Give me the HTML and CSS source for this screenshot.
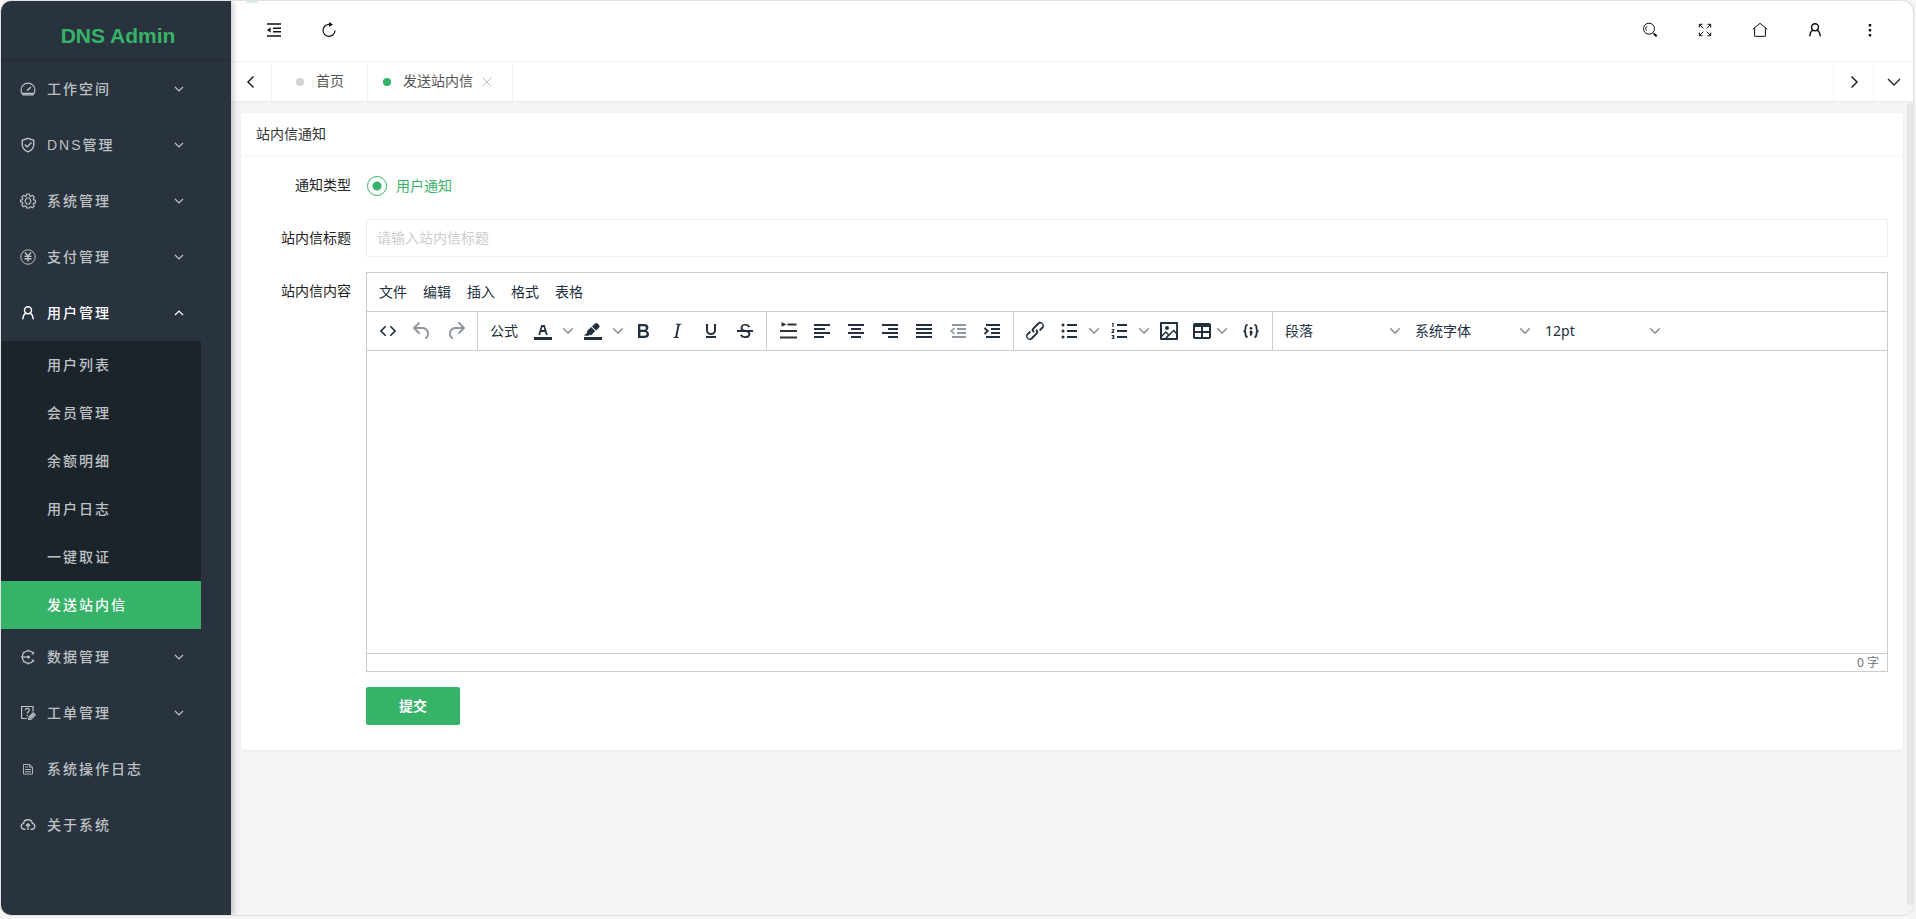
FILE: index.html
```html
<!DOCTYPE html>
<html lang="zh-CN">
<head>
<meta charset="utf-8">
<title>DNS Admin</title>
<link rel="stylesheet" href="styles.css">
</head>
<body>
<svg class="sprite" aria-hidden="true">
  <symbol id="chev" viewBox="0 0 10 10"><path d="M8.7 2.2c.3-.3.8-.3 1 0 .4.4.4.9 0 1.2L5.7 7.8c-.3.3-.9.3-1.2 0L.2 3.4a.8.8 0 0 1 0-1.2c.3-.3.8-.3 1.1 0L5 6l3.7-3.8z"/></symbol>
  <symbol id="down" viewBox="0 0 16 16"><path d="M4 6l4 4 4-4" fill="none" stroke="currentColor" stroke-width="1.2"/></symbol>
  <symbol id="user" viewBox="0 0 16 16"><g fill="none" stroke="currentColor" stroke-width="1.5" stroke-linecap="round"><circle cx="8" cy="5.2" r="3.5"/><path d="M5.6 8.2C3.9 9.4 3 11 2.8 13.8M10.4 8.2c1.7 1.2 2.6 2.8 2.8 5.6"/></g></symbol>
</svg>
<div class="window">
  <aside class="side">
    <div class="logo">DNS Admin</div>
    <nav class="menu">
      <a class="item" href="#"><svg class="mi" viewBox="0 0 16 16"><g fill="none" stroke="currentColor" stroke-width="1.2"><path d="M3 13.8h10a6.9 6.9 0 1 0-10 0z"/><path d="M3 12.600h10M7.200 9.600L10.800 6" stroke-width="1.500"/></g></svg><span>工作空间</span><svg class="arrow"><use href="#down"/></svg></a>
      <a class="item" href="#"><svg class="mi" viewBox="0 0 16 16"><g fill="none" stroke="currentColor" stroke-width="1.4"><path d="M8 1.3l5.7 2v5c0 3.2-2.5 5.2-5.7 6.600-3.200-1.400-5.700-3.400-5.700-6.600v-5z"/><path d="M4.800 7.600l2.400 2.400 4.200-4.400"/></g></svg><span>DNS管理</span><svg class="arrow"><use href="#down"/></svg></a>
      <a class="item" href="#"><svg class="mi" viewBox="0 0 16 16"><g fill="none" stroke="currentColor" stroke-width="1.2" stroke-linejoin="round"><path d="M6.600 1h2.800l.4 1.900 1.100.5 1.700-1.100 1.700 1.900-1 1.600.5 1.100 1.700.3v2.600l-1.800.4-.5 1.100 1 1.700-1.800 1.800-1.600-1-1.100.4L9.300 15H6.700l-.4-1.800-1.100-.4-1.600 1-1.900-1.800 1.100-1.700-.5-1.100L.5 8.800V7.200l1.800-.4.500-1.100-1-1.600 1.700-1.800 1.700 1 1.100-.4z"/><path d="M6.600 5h2.800l1.600 3-1.600 3H6.600L5 8z"/></g></svg><span>系统管理</span><svg class="arrow"><use href="#down"/></svg></a>
      <a class="item" href="#"><svg class="mi" viewBox="0 0 16 16"><g fill="none" stroke="currentColor"><circle cx="8" cy="8" r="7.2"/><path d="M5 3.500l3 3.800 3-3.800M4.500 7.400h7M4.500 9.700h7M8 7v5.500" stroke-width="1.4"/></g></svg><span>支付管理</span><svg class="arrow"><use href="#down"/></svg></a>
      <a class="item open" href="#"><svg class="mi"><use href="#user"/></svg><span>用户管理</span><svg class="arrow"><use href="#down"/></svg></a>
      <div class="sub">
        <a href="#">用户列表</a><a href="#">会员管理</a><a href="#">余额明细</a><a href="#">用户日志</a><a href="#">一键取证</a><a class="on" href="#">发送站内信</a>
      </div>
      <a class="item" href="#"><svg class="mi" viewBox="0 0 16 16"><g fill="none" stroke="currentColor"><path d="M13.600 4.600A6.200 6.200 0 1 0 13.600 11.400" stroke-width="1.2"/><path d="M1 8h7" stroke-width="1.2"/><path d="M13.600 2.800v2.200h-2M13.600 13v-2h-2M8 .6v1.600M8 14v1.600M3.200 2.600l1 1.200M3.200 13.400l1-1.200" stroke-width="1"/></g><circle cx="8.500" cy="8" r="1.500" fill="currentColor"/></svg><span>数据管理</span><svg class="arrow"><use href="#down"/></svg></a>
      <a class="item" href="#"><svg class="mi" viewBox="0 0 16 16"><g fill="none" stroke="currentColor" stroke-width="1.2"><path d="M13 6.500V1.500H1.600v12H7"/><path d="M5.300 5.200c0-2.600 4-2.400 4 0 0 1.500-2 1.600-2 3.200M7.300 9.800v1.400"/><path d="M8.600 14.600l.4-2.500 4.200-4.200 2 2L11 14.200zM10 13l3.500-3.500"/></g></svg><span>工单管理</span><svg class="arrow"><use href="#down"/></svg></a>
      <a class="item" href="#"><svg class="mi" viewBox="0 0 16 16"><path d="M3.500 3.500h6l3 2.600v7h-9zM9.500 3.500v2.700h3M5 6h3M5 8.500h6M5 10.800h6" fill="none" stroke="currentColor" stroke-width=".9"/></svg><span>系统操作日志</span></a>
      <a class="item" href="#"><svg class="mi" viewBox="0 0 16 16"><path d="M5.500 12.300H4A3 3 0 0 1 3.600 6.400C4 1.600 11.600 1.400 12.400 6.400c3.300.5 3 5.600-.4 5.900h-1.500M8 13V7M5.800 9L8 6.800 10.200 9" fill="none" stroke="currentColor" stroke-width="1.4"/></svg><span>关于系统</span></a>
    </nav>
  </aside>
  <main class="main">
    <header class="bar">
      <button class="hb" aria-label="收起菜单"><svg viewBox="0 0 16 16"><path d="M1 2h14M7 6.300h8M7 9.700h8M1 14h14" fill="none" stroke="currentColor" stroke-width="1.6"/><path d="M1 8l3.600-2.500v5z" fill="currentColor"/></svg></button>
      <button class="hb" aria-label="刷新"><svg viewBox="0 0 16 16"><path d="M8.600 2.400A6 6 0 1 0 14 8.600" fill="none" stroke="currentColor" stroke-width="1.2"/><path d="M8 0l4 2.500L8.200 5z" fill="currentColor"/></svg></button>
      <span class="grow"></span>
      <button class="hb" aria-label="搜索"><svg viewBox="0 0 16 16"><g fill="none" stroke="currentColor"><circle cx="7" cy="6.700" r="5.500"/><path d="M4.300 8.600A3.300 3.300 0 0 1 5 4.200M11 10.500l3.700 3.700"/><path d="M12 11.700l2.600 2.600" stroke-width="2"/></g></svg></button>
      <button class="hb" aria-label="全屏"><svg viewBox="0 0 16 16"><path d="M6.300 6.300l-4-4M9.700 6.300l4-4M6.300 9.700l-4 4M9.700 9.700l4 4M2.300 5.500V2.300h3.200M10.500 2.300h3.200v3.200M13.700 10.500v3.200h-3.200M5.500 13.700H2.300v-3.200" fill="none" stroke="currentColor" stroke-width="1"/></svg></button>
      <button class="hb" aria-label="主页"><svg viewBox="0 0 16 16"><path d="M.8 7.300L8 1.300l7.200 6M2.600 6v8.300h10.800V6" fill="none" stroke="currentColor"/></svg></button>
      <button class="hb" aria-label="用户"><svg><use href="#user"/></svg></button>
      <button class="hb" aria-label="更多"><svg viewBox="0 0 16 16"><path d="M6.800 2h2.400v2.400H6.800zM6.800 7h2.400v2.400H6.800zM6.800 12h2.400v2.400H6.800z" fill="currentColor"/></svg></button>
    </header>
    <div class="tabs">
      <button class="ctl" aria-label="向左"><svg viewBox="0 0 16 16"><path d="M10.500 2.500L5 8l5.500 5.500" fill="none" stroke="currentColor" stroke-width="1.5"/></svg></button>
      <a class="tab" href="#"><i class="dot"></i><span>首页</span></a>
      <div class="tab cur"><i class="dot"></i><a href="#">发送站内信</a><button class="x" aria-label="关闭"><svg viewBox="0 0 10 10"><path d="M.5.5l9 9M9.500.5l-9 9" stroke="currentColor"/></svg></button></div>
      <span class="grow"></span>
      <button class="ctl right" aria-label="向右"><svg viewBox="0 0 16 16"><path d="M5.500 2.500L11 8l-5.500 5.500" fill="none" stroke="currentColor" stroke-width="1.5"/></svg></button>
      <button class="ctl right" aria-label="展开"><svg viewBox="0 0 16 16"><path d="M2 5l6 6 6-6" fill="none" stroke="currentColor" stroke-width="1.3"/></svg></button>
    </div>
    <div class="content">
      <section class="card">
        <h1 class="title">站内信通知</h1>
        <form class="form">
          <span class="lab" id="type">通知类型</span>
          <div class="field" role="radiogroup" aria-labelledby="type"><label class="radio"><input type="radio" name="type" checked>用户通知</label></div>
          <label class="lab" for="subject">站内信标题</label>
          <input class="text" id="subject" type="text" placeholder="请输入站内信标题">
          <label class="lab" for="body">站内信内容</label>
          <div class="editor">
            <div class="menubar"><button type="button">文件</button><button type="button">编辑</button><button type="button">插入</button><button type="button">格式</button><button type="button">表格</button></div>
            <div class="tools">
              <div class="grp">
                <button type="button" class="tb" aria-label="源代码"><svg viewBox="0 0 24 24"><path d="M9.800 15.700c.3.3.3.8 0 1-.3.4-.9.4-1.200 0l-4.400-4.100a.8.8 0 0 1 0-1.200l4.400-4.200c.3-.3.9-.3 1.200 0 .3.3.3.8 0 1.100L6 12l3.800 3.700zM14.200 15.700c-.3.3-.3.8 0 1 .4.4.9.4 1.200 0l4.400-4.100c.3-.3.3-.9 0-1.200l-4.400-4.200a.8.8 0 0 0-1.200 0c-.3.3-.3.8 0 1.100L18 12l-3.800 3.700z"/></svg></button>
                <button type="button" class="tb" disabled aria-label="撤销"><svg viewBox="0 0 24 24"><path d="M6.400 8H12c3.700 0 6.200 2 6.800 5.100.6 2.700-.4 5.600-2.300 6.800a1 1 0 0 1-1-1.800c1.100-.6 1.800-2.700 1.400-4.600-.5-2.100-2.100-3.500-4.900-3.500H6.400l3.300 3.300a1 1 0 1 1-1.400 1.400l-5-5a1 1 0 0 1 0-1.400l5-5a1 1 0 0 1 1.400 1.400L6.400 8z"/></svg></button>
                <button type="button" class="tb" disabled aria-label="重做"><svg viewBox="0 0 24 24"><path d="M17.600 10H12c-2.800 0-4.400 1.400-4.900 3.500-.4 2 .3 4 1.400 4.600a1 1 0 1 1-1 1.800c-2-1.200-2.900-4.100-2.300-6.800.6-3 3-5.100 6.800-5.100h5.600l-3.300-3.300a1 1 0 1 1 1.400-1.400l5 5a1 1 0 0 1 0 1.400l-5 5a1 1 0 0 1-1.400-1.400l3.300-3.300z"/></svg></button>
              </div>
              <div class="grp">
                <button type="button" class="tb word">公式</button>
                <button type="button" class="tb" aria-label="文字颜色"><svg viewBox="0 0 24 24"><path d="M3 18h18v3H3z"/><path d="M8.700 16h-.8a.5.500 0 0 1-.5-.6l2.700-9c.1-.3.3-.4.5-.4h2.800c.2 0 .4.100.5.400l2.700 9a.5.500 0 0 1-.5.600h-.8a.5.500 0 0 1-.4-.4l-.7-2.200c0-.3-.3-.4-.5-.4h-3.400c-.2 0-.4.100-.5.400l-.7 2.200c0 .3-.2.400-.4.400zm2.600-7.600l-.6 2a.5.500 0 0 0 .5.600h1.600a.5.500 0 0 0 .5-.6l-.6-2c0-.3-.3-.4-.5-.4h-.4c-.2 0-.4.100-.5.400z"/></svg></button><button type="button" class="cv" aria-label="选择文字颜色"><svg><use href="#chev"/></svg></button>
                <button type="button" class="tb" aria-label="背景颜色"><svg viewBox="0 0 24 24"><path d="M3 18h18v3H3z"/><path d="M7.700 16.700H3l3.300-3.300-.7-.8L10.200 8l4 4.100-4 4.200c-.2.200-.6.200-.8 0l-.6-.7-1.100 1.100zm5-7.500L11 7.400l3-2.900a2 2 0 0 1 2.600 0L18 6c.7.700.7 2 0 2.700l-2.900 2.900-1.800-1.800-.5-.6"/></svg></button><button type="button" class="cv" aria-label="选择背景颜色"><svg><use href="#chev"/></svg></button>
                <button type="button" class="tb" aria-label="粗体"><svg viewBox="0 0 24 24"><path fill-rule="evenodd" d="M7.800 19c-.3 0-.5 0-.6-.2l-.2-.5V5.700c0-.2 0-.4.2-.5l.6-.2h5c1.500 0 2.700.3 3.500 1 .7.6 1.100 1.400 1.100 2.500a3 3 0 0 1-.6 1.900c-.4.6-1 1-1.600 1.200.4.1.9.3 1.300.6s.8.7 1 1.200c.4.4.5 1 .5 1.600 0 1.300-.4 2.300-1.300 3-.8.7-2.100 1-3.800 1H7.800zm5-8.300c.6 0 1.200-.1 1.600-.5.4-.3.6-.7.6-1.300 0-1.100-.8-1.700-2.300-1.700H9.300v3.500h3.400zm.5 6c.7 0 1.300-.1 1.700-.4.4-.4.6-.9.6-1.500s-.2-1-.7-1.400c-.4-.3-1-.4-2-.4H9.400v3.800h4z"/></svg></button>
                <button type="button" class="tb" aria-label="斜体"><svg viewBox="0 0 24 24"><path d="M16.700 4.700l-.1.900h-.3c-.6 0-1 0-1.400.3-.3.3-.4.6-.5 1.100l-2.100 9.800v.6c0 .5.4.8 1.400.8h.2l-.2.800H8l.2-.8h.2c1.100 0 1.800-.5 2-1.500l2-9.800.1-.5c0-.6-.4-.8-1.400-.8h-.3l.2-.9h5.700z"/></svg></button>
                <button type="button" class="tb" aria-label="下划线"><svg viewBox="0 0 24 24"><path d="M8 5v6.500a4 3.500 0 0 0 8 0V5" fill="none" stroke="currentColor" stroke-width="2"/><path d="M7 17h10v2H7z"/></svg></button>
                <button type="button" class="tb" aria-label="删除线"><svg viewBox="0 0 24 24"><path d="M15.600 8.500c-.5-.7-1-1.100-1.300-1.300-.6-.4-1.300-.6-2-.6-2.700 0-2.800 1.700-2.800 2.100 0 1.600 1.800 2 3.200 2.300 4.400.9 4.600 2.800 4.600 3.900 0 1.400-.7 4.100-5 4.100A6.200 6.200 0 0 1 7 16.400l1.500-1.100c.4.6 1.600 2 3.700 2 1.600 0 2.500-.4 3-1.200.4-.8.3-2-.8-2.600-.7-.4-1.600-.7-2.900-1-1-.2-3.900-.8-3.900-3.600C7.600 6 10.300 5 12.400 5c2.900 0 4.200 1.600 4.700 2.400l-1.500 1.100z"/><path d="M4 11h16v2H4z"/></svg></button>
              </div>
              <div class="grp">
                <button type="button" class="tb" aria-label="行高"><svg viewBox="0 0 24 24"><path d="M11.500 5.500H20.500M4 12h17M4 18.500h17" stroke="#333" stroke-width="2"/><path d="M5.500 3l5 2.500-5 2.300z" fill="#333"/></svg></button>
                <button type="button" class="tb" aria-label="左对齐"><svg viewBox="0 0 24 24"><path d="M4 5h16v2H4zM4 9h11v2H4zM4 13h16v2H4zM4 17h10v2H4z"/></svg></button>
                <button type="button" class="tb" aria-label="居中对齐"><svg viewBox="0 0 24 24"><path d="M4 5h16v2H4zM7 9h10v2H7zM4 13h16v2H4zM7 17h10v2H7z"/></svg></button>
                <button type="button" class="tb" aria-label="右对齐"><svg viewBox="0 0 24 24"><path d="M4 5h16v2H4zM10 9h10v2H10zM4 13h16v2H4zM10 17h10v2H10z"/></svg></button>
                <button type="button" class="tb" aria-label="两端对齐"><svg viewBox="0 0 24 24"><path d="M4 5h16v2H4zM4 9h16v2H4zM4 13h16v2H4zM4 17h16v2H4z"/></svg></button>
                <button type="button" class="tb" disabled aria-label="减少缩进"><svg viewBox="0 0 24 24"><path d="M6 5h14v2H6zM11 9h9v2h-9zM11 13h9v2h-9zM6 17h14v2H6z"/><path d="M8.500 9L5.200 12l3.300 3" fill="none" stroke="currentColor" stroke-width="1.6"/></svg></button>
                <button type="button" class="tb" aria-label="增加缩进"><svg viewBox="0 0 24 24"><path d="M6 5h14v2H6zM11 9h9v2h-9zM11 13h9v2h-9zM6 17h14v2H6z"/><path d="M4.500 9L7.800 12l-3.300 3" fill="none" stroke="currentColor" stroke-width="1.8"/></svg></button>
              </div>
              <div class="grp">
                <button type="button" class="tb" aria-label="链接"><svg viewBox="0 0 24 24"><path d="M6.200 12.300a1 1 0 0 1 1.400 1.400l-2.100 2a2 2 0 1 0 2.700 2.800l4.800-4.800a1 1 0 0 0 0-1.400 1 1 0 1 1 1.400-1.300 2.900 2.900 0 0 1 0 4L9.600 20a3.900 3.900 0 0 1-5.500-5.500l2-2zm11.600-.6a1 1 0 0 1-1.400-1.400l2-2a2 2 0 1 0-2.600-2.800L11 10.300a1 1 0 0 0 0 1.400A1 1 0 1 1 9.600 13a2.900 2.900 0 0 1 0-4L14.400 4a3.900 3.900 0 0 1 5.500 5.500l-2 2z"/></svg></button>
                <button type="button" class="tb" aria-label="无序列表"><svg viewBox="0 0 24 24"><path d="M10 5h10v2H10zM10 11h10v2H10zM10 17h10v2H10z"/><circle cx="6" cy="6" r="1.5"/><circle cx="6" cy="12" r="1.5"/><circle cx="6" cy="18" r="1.5"/></svg></button><button type="button" class="cv" aria-label="无序列表样式"><svg><use href="#chev"/></svg></button>
                <button type="button" class="tb" aria-label="有序列表"><svg viewBox="0 0 24 24"><path d="M10 5h10v2H10zM10 11h10v2H10zM10 17h10v2H10z"/><path d="M5 4.500h1V8M4.700 10.500h2v1.300l-1.700 1.400v.3h2M4.700 16.500h2v1.500H5.200h1.500v1.500h-2" fill="none" stroke="currentColor" stroke-width="1.2"/></svg></button><button type="button" class="cv" aria-label="有序列表样式"><svg><use href="#chev"/></svg></button>
                <button type="button" class="tb" aria-label="图片"><svg viewBox="0 0 24 24"><path fill-rule="evenodd" d="M5 15.700l3.300-3.200c.3-.3.7-.3 1 0L12 15l4.100-4c.3-.4.8-.4 1 0l2 1.900V5H5v10.700zM5 18V19h3l2.800-2.900-2-2L5 17.900zm14-3l-2.500-2.400-6.400 6.500H19v-4zM4 3h16c.6 0 1 .4 1 1v16c0 .6-.4 1-1 1H4a1 1 0 0 1-1-1V4c0-.6.4-1 1-1zm6 8a2 2 0 1 0 0-4 2 2 0 0 0 0 4z"/></svg></button>
                <button type="button" class="tb menu-btn" aria-label="表格"><svg viewBox="0 0 24 24"><path fill-rule="evenodd" d="M19 4a2 2 0 0 1 2 2v12a2 2 0 0 1-2 2H5a2 2 0 0 1-2-2V6c0-1.100.9-2 2-2h14zM5 14v4h6v-4H5zm14 0h-6v4h6v-4zm0-6h-6v4h6V8zM5 12h6V8H5v4z"/></svg><span class="cv"><svg><use href="#chev"/></svg></span></button>
                <button type="button" class="tb" aria-label="代码示例"><svg viewBox="0 0 24 24"><g fill="none" stroke="currentColor" stroke-width="1.8"><path d="M8.600 6C6.500 6 6.500 7 6.500 9s0 3-2 3c2 0 2 1.500 2 3s0 3 2.100 3M15.400 6c2.100 0 2.100 1 2.100 3s0 3 2 3c-2 0-2 1.500-2 3s0 3-2.100 3"/><path d="M12.300 12.500c.5 1.500 0 3-1.300 3.800"/></g><circle cx="12" cy="9.300" r="1.400"/><circle cx="12" cy="13" r="1.500"/></svg></button>
              </div>
              <div class="grp last">
                <span class="sel"><select aria-label="段落格式"><option>段落</option></select><svg><use href="#chev"/></svg></span>
                <span class="sel"><select aria-label="字体"><option>系统字体</option></select><svg><use href="#chev"/></svg></span>
                <span class="sel"><select aria-label="字号"><option>12pt</option></select><svg><use href="#chev"/></svg></span>
              </div>
            </div>
            <textarea class="area" id="body"></textarea>
            <div class="status">0 字</div>
          </div>
          <button class="submit" type="submit">提交</button>
        </form>
      </section>
      <div class="scroll"></div>
    </div>
  </main>
  <i class="mark"></i>
</div>
</body>
</html>
```
FILE: styles.css
```css
* { box-sizing: border-box; }
body {
  margin: 0;
  height: 100vh;
  padding: 1px 3px 4px 1px;
  background: #f5f5f5;
  color: #222;
  font: 14px/20px "Noto Sans", "Noto Sans CJK SC", sans-serif;
}
a { color: inherit; text-decoration: none; }
button { padding: 0; border: 0; background: none; color: inherit; font: inherit; cursor: pointer; }
svg { display: block; flex: none; }
.sprite { position: absolute; width: 0; height: 0; }
.grow { flex: 1; }

.window {
  position: relative;
  display: flex;
  height: 100%;
  overflow: hidden;
  border-radius: 10px;
  background: #fff;
  box-shadow: 0 0 2px rgba(0, 0, 0, .3);
}
.mark { position: absolute; left: 245px; top: 0; width: 12px; height: 2px; background: #d5efe1; }

.side {
  z-index: 1;
  flex: none;
  width: 230px;
  background: #28333e;
  box-shadow: 2px 0 6px rgba(0, 21, 41, .25);
  color: #bec1c5;
  font-family: "Liberation Sans", "Noto Sans CJK SC", sans-serif;
  font-weight: 500;
  letter-spacing: 2px;
}
.logo {
  height: 60px;
  padding: 10px 0 0 4px;
  border-bottom: 1px solid #222b35;
  color: #36b368;
  font-size: 21px;
  font-weight: 700;
  line-height: 50px;
  letter-spacing: 0;
  text-align: center;
}
.menu { width: 200px; }
.item { display: flex; align-items: center; height: 56px; padding: 0 14px 0 19px; }
.item span { flex: 1; }
.mi { width: 16px; height: 16px; margin-right: 11px; }
.arrow { width: 16px; height: 16px; }
.open { color: #fff; }
.open .arrow { transform: rotate(180deg); }
.sub { border-radius: 2px 2px 0 0; background: #1c242b; }
.sub a { display: block; padding-left: 46px; line-height: 48px; }
.sub .on { background: #36b368; color: #fff; }

.main { display: flex; flex: 1; flex-direction: column; min-width: 0; }
.bar { display: flex; height: 61px; padding: 0 16px 0 15px; border-bottom: 1px solid #f2f2f2; color: #111; }
.hb { display: grid; width: 55px; height: 58px; place-items: center; }
.hb svg { width: 16px; height: 16px; }
.tabs { display: flex; height: 40px; border-bottom: 1px solid #e9e9e9; color: #555; }
.ctl { display: grid; width: 41px; place-items: center; border-right: 1px solid #f2f2f2; color: #222; }
.ctl svg { width: 16px; height: 16px; }
.ctl.right { width: 40px; border-right: 0; border-left: 1px solid #f2f2f2; }
.tab { display: flex; align-items: center; padding: 0 23px 0 24px; border-right: 1px solid #f2f2f2; }
.tab span, .tab a { padding-bottom: 2px; }
.dot { width: 8px; height: 8px; margin-right: 12px; border-radius: 50%; background: #d2d2d2; }
.cur { padding: 0 20px 0 15px; }
.cur .dot { background: #36b368; }
.x { margin-left: 9px; color: #bbb; }
.x svg { width: 10px; height: 10px; }

.content { position: relative; flex: 1; padding: 11px 10px; background: #f4f4f4; }
.scroll { position: absolute; top: 1px; right: 0; bottom: 10px; width: 6px; border-radius: 2px; background: #e6e6e6; }
.card { border-radius: 2px; background: #fff; box-shadow: 0 1px 2px rgba(0, 0, 0, .05); }
.title { margin: 0; padding: 0 15px; border-bottom: 1px solid #f6f6f6; color: #333; font-size: 14px; font-weight: 400; line-height: 42px; }
.form { display: grid; grid-template-columns: 110px 1fr; row-gap: 15px; padding: 10px 15px 25px; }
.lab { padding-right: 15px; line-height: 38px; text-align: right; }
.radio { display: inline-flex; align-items: center; height: 40px; margin: 0 0 -2px 1px; gap: 9px; color: #36b368; }
.radio input {
  appearance: none;
  width: 20px;
  height: 20px;
  margin: 0;
  border: 1px solid #36b368;
  border-radius: 50%;
  background: radial-gradient(circle, #36b368 4px, transparent 5px);
}
.field { height: 38px; }
.text { height: 38px; padding: 0 10px 2px; border: 1px solid #eee; border-radius: 2px; font: inherit; }
.text::placeholder { color: #ccc; }

.editor { border: 1px solid #ccc; color: #222f3e; }
.menubar { display: flex; height: 39px; padding: 0 4px; border-bottom: 1px solid #ccc; }
.menubar button { padding: 0 8px; }
.tools { display: flex; height: 39px; border-bottom: 1px solid #ccc; }
.grp { display: flex; padding: 0 4px; border-right: 1px solid #ccc; }
.grp.last { border: 0; }
.tb { display: flex; align-items: center; justify-content: center; width: 34px; }
.tb:disabled { color: rgba(34, 47, 62, .5); }
.tb > svg { width: 24px; height: 24px; fill: currentColor; }
.word { width: 44px; }
.menu-btn { width: 48px; }
.cv { display: grid; width: 16px; place-items: center; }
.cv svg, .sel svg { width: 10px; height: 10px; fill: rgba(34, 47, 62, .5); }
.sel { display: grid; width: 130px; align-items: center; }
.sel select, .sel svg { grid-area: 1 / 1; }
.sel select { appearance: none; height: 34px; padding: 0 20px 0 8px; border: 0; background: none; color: inherit; font: inherit; }
.sel svg { justify-self: end; margin-right: 7px; pointer-events: none; }
.area { display: block; width: 100%; height: 302px; padding: 16px; border: 0; outline: 0; resize: none; font: inherit; }
.status { height: 18px; padding-right: 8px; border-top: 1px solid #ccc; color: #6b737d; font-size: 12px; line-height: 18px; text-align: right; }
.submit { grid-column: 2; justify-self: start; height: 38px; padding: 0 33px; border-radius: 2px; background: #36b368; color: #fff; font-weight: 700; }
```
